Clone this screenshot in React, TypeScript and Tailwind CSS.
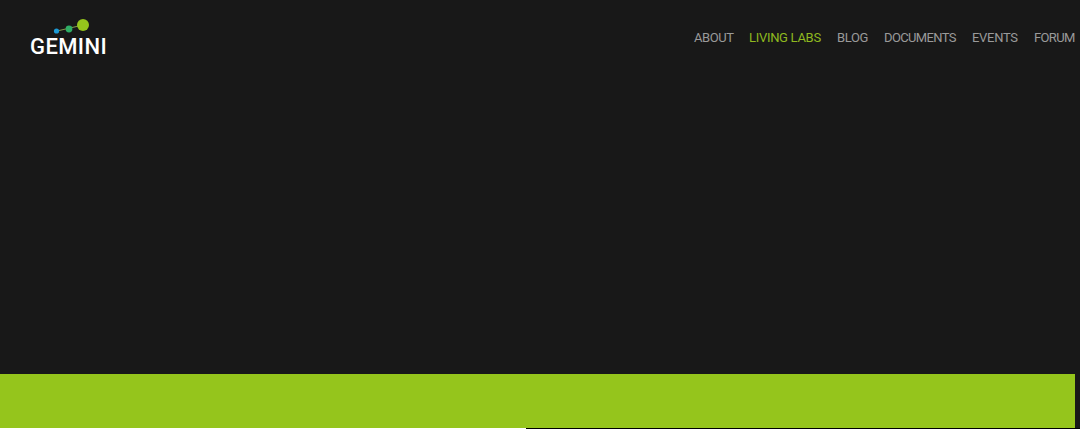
export default function App() {
  const links = [
    { label: "ABOUT", w: "w-[39px]", c: "text-[#9a9a9a] tracking-[-0.4px]" },
    { label: "LIVING LABS", w: "w-[72px]", c: "text-[#8fb81f] tracking-[-0.3px]" },
    { label: "BLOG", w: "w-[31px]", c: "text-[#9a9a9a] tracking-[-0.4px]" },
    { label: "DOCUMENTS", w: "w-[72px]", c: "text-[#9a9a9a] tracking-[-0.65px]" },
    { label: "EVENTS", w: "w-[46px]", c: "text-[#9a9a9a] tracking-[-0.3px]" },
    { label: "FORUM", w: "w-[41px]", c: "text-[#9a9a9a] tracking-[-0.65px]" },
  ];
  return (
    <div className="w-[1080px] h-[429px] overflow-hidden bg-[#181818] flex flex-col font-['Roboto',sans-serif]">
      <header className="h-[374px] flex items-start justify-between pl-[30px] pr-[5px]">
        <div className="flex flex-col w-[78px] pt-[17px]">
          <svg width="78" height="20" viewBox="0 0 78 20" className="block">
            <line x1="27" y1="14" x2="53" y2="8" stroke="#7f9a4a" strokeWidth="1.2" />
            <circle cx="26.5" cy="14" r="2.6" fill="#1c9ad6" />
            <circle cx="39" cy="12" r="3.4" fill="#2fae66" />
            <circle cx="53" cy="8" r="6" fill="#95c51c" />
          </svg>
          <span className="text-[22px] leading-[20px] font-medium text-white tracking-[0.4px] whitespace-nowrap">GEMINI</span>
        </div>
        <nav className="flex gap-4 pt-[30px]">
          {links.map((l) => (
            <a key={l.label} className={`${l.w} ${l.c} text-[13px] leading-4 whitespace-nowrap`}>{l.label}</a>
          ))}
        </nav>
      </header>
      <div className="h-[54px] w-[1075px] bg-[#95c51c]" />
      <div className="h-px flex">
        <div className="w-[526px] bg-white" />
        <div className="flex-1 bg-black" />
      </div>
    </div>
  );
}
